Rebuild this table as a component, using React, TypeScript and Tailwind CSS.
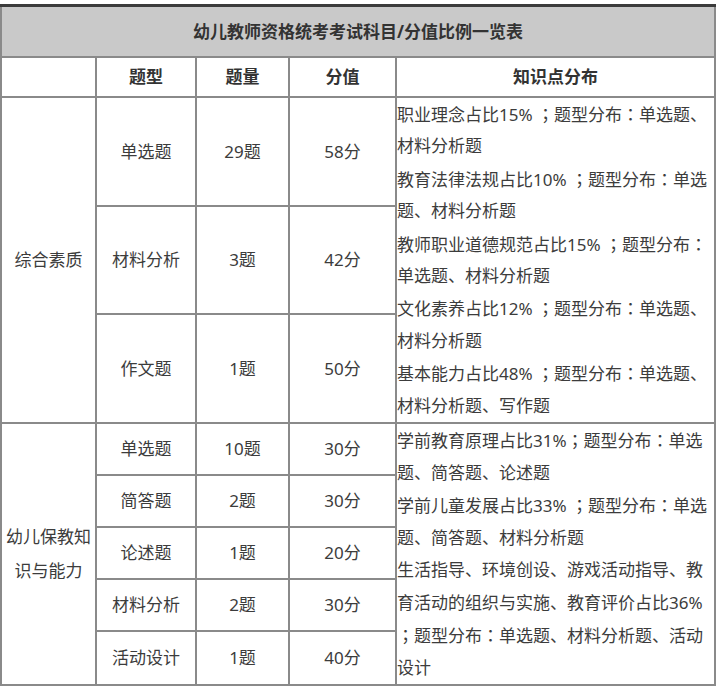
import React from "react";

const s1Lines = [
  "职业理念占比15% ；题型分布：单选题、",
  "材料分析题",
  "教育法律法规占比10% ；题型分布：单选",
  "题、材料分析题",
  "教师职业道德规范占比15% ；题型分布：",
  "单选题、材料分析题",
  "文化素养占比12% ；题型分布：单选题、",
  "材料分析题",
  "基本能力占比48% ；题型分布：单选题、",
  "材料分析题、写作题",
];

const s2Lines = [
  "学前教育原理占比31%；题型分布：单选",
  "题、简答题、论述题",
  "学前儿童发展占比33% ；题型分布：单选",
  "题、简答题、材料分析题",
  "生活指导、环境创设、游戏活动指导、教",
  "育活动的组织与实施、教育评价占比36%",
  "；题型分布：单选题、材料分析题、活动",
  "设计",
];

function Line({ text, h }: { text: string; h: string }) {
  const parts = text.split(/([：；])/);
  return (
    <div className={`whitespace-nowrap overflow-visible ${h}`}>
      {parts.map((p, i) =>
        p === "：" || p === "；" ? (
          <span key={i} className="font-['Noto_Sans_CJK_JP',sans-serif]">
            {p}
          </span>
        ) : (
          <React.Fragment key={i}>{p}</React.Fragment>
        )
      )}
    </div>
  );
}

function Cell({ children, className = "" }: { children?: React.ReactNode; className?: string }) {
  return (
    <div className={`bg-white flex items-center justify-center text-center ${className}`}>
      {children}
    </div>
  );
}

export default function App() {
  const s1Rows = [
    ["单选题", "29题", "58分"],
    ["材料分析", "3题", "42分"],
    ["作文题", "1题", "50分"],
  ];
  const s2Rows = [
    ["单选题", "10题", "30分"],
    ["简答题", "2题", "30分"],
    ["论述题", "1题", "20分"],
    ["材料分析", "2题", "30分"],
    ["活动设计", "1题", "40分"],
  ];
  return (
    <div className="w-[720px] h-[687px] bg-white pt-[4px] font-['Noto_Sans','Noto_Sans_CJK_SC',sans-serif] text-[17px] text-[#3c3c3c]">
      <div className="w-[716px] border-t-[3px] border-[#3b3b3b]">
        <div className="grid grid-cols-[93px_98px_91px_105px_317px] grid-rows-[49px_38px_107px_106px_107px_50px_50px_50px_50px_52px] gap-[2px] bg-[#8a8a8a] px-[2px] pb-[2px]">
          <div className="col-span-5 bg-[#c9c9c9] flex items-center justify-center font-bold text-[#333]">
            幼儿教师资格统考考试科目/分值比例一览表
          </div>
          <Cell className="bg-[#f7f7f7]" />
          <Cell className="bg-[#f7f7f7] font-bold text-[#333]">题型</Cell>
          <Cell className="bg-[#f7f7f7] font-bold text-[#333]">题量</Cell>
          <Cell className="bg-[#f7f7f7] font-bold text-[#333]">分值</Cell>
          <Cell className="bg-[#f7f7f7] font-bold text-[#333]">知识点分布</Cell>

          <Cell className="row-span-3">综合素质</Cell>
          {s1Rows.map((r, i) => (
            <React.Fragment key={i}>
              <Cell>{r[0]}</Cell>
              <Cell>{r[1]}</Cell>
              <Cell>{r[2]}</Cell>
              {i === 0 && (
                <div className="row-span-3 bg-white leading-[32.4px] overflow-hidden">
                  {s1Lines.map((l, j) => (
                    <Line key={j} text={l} h="h-[32.4px]" />
                  ))}
                </div>
              )}
            </React.Fragment>
          ))}

          <Cell className="row-span-5 leading-[34px]">
            <span>
              幼儿保教知
              <br />
              识与能力
            </span>
          </Cell>
          {s2Rows.map((r, i) => (
            <React.Fragment key={i}>
              <Cell>{r[0]}</Cell>
              <Cell>{r[1]}</Cell>
              <Cell>{r[2]}</Cell>
              {i === 0 && (
                <div className="row-span-5 bg-white leading-[32.5px] overflow-hidden">
                  {s2Lines.map((l, j) => (
                    <Line key={j} text={l} h="h-[32.5px]" />
                  ))}
                </div>
              )}
            </React.Fragment>
          ))}
        </div>
      </div>
    </div>
  );
}
